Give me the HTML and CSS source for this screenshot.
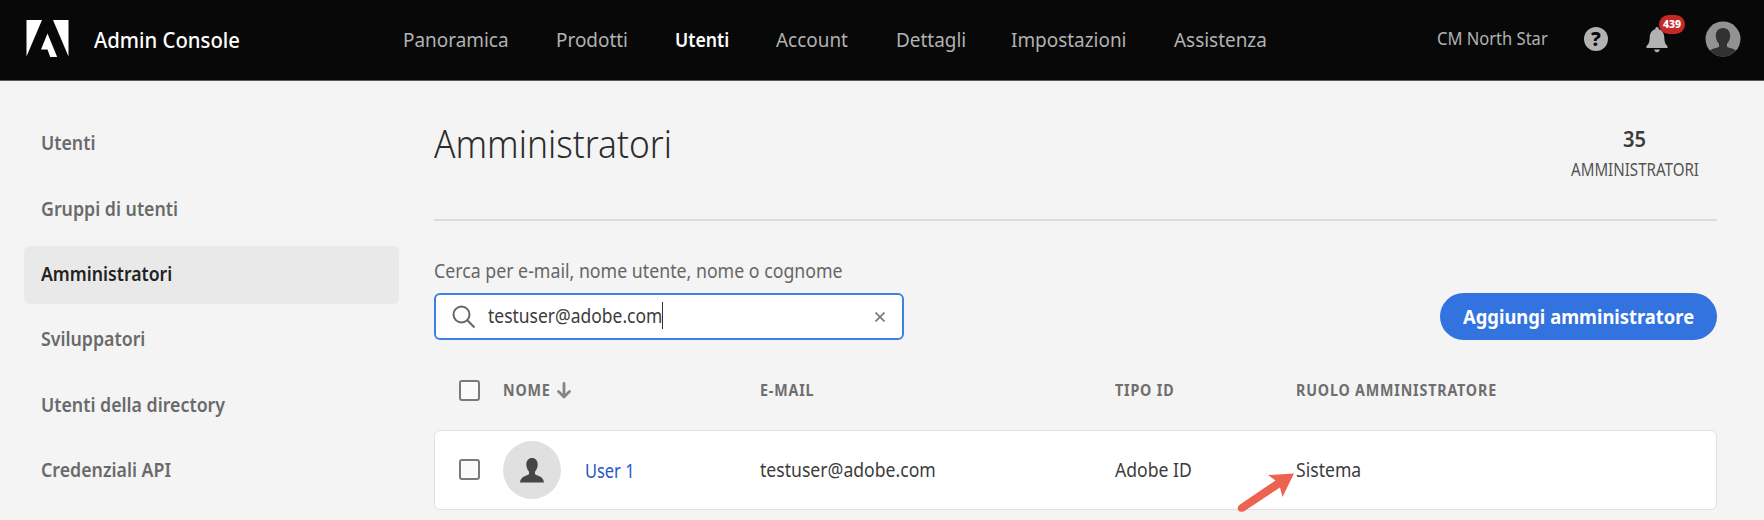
FILE: index.html
```html
<!DOCTYPE html>
<html lang="it">
<head>
<meta charset="utf-8">
<title>Admin Console</title>
<link rel="stylesheet" href="styles.css">
</head>
<body>
<header class="topbar">
  <svg class="logo" viewBox="0 0 42 37"><path d="M0 0H15.5L0 36.5zM26.500 0H42V36.500zM21 13.500L30.700 37H23.700L21 29.500H14.500z"/></svg>
  <span class="brand t">Admin Console</span>
  <nav class="nav">
    <span class="t">Panoramica</span>
    <span class="t">Prodotti</span>
    <span class="t active">Utenti</span>
    <span class="t">Account</span>
    <span class="t">Dettagli</span>
    <span class="t">Impostazioni</span>
    <span class="t">Assistenza</span>
  </nav>
  <span class="org t">CM North Star</span>
  <span class="help">?</span>
  <span class="bell">
    <svg viewBox="0 0 22 26"><path d="M11 0c1.200 0 1.700.8 1.700 2.200 4 1 5.400 4.200 5.600 8.300.2 4.600.9 6.700 3.200 8.500V21H.5v-2c2.300-1.800 3-3.900 3.200-8.500.2-4.100 1.600-7.300 5.600-8.300C9.300.8 9.800 0 11 0zM8.200 22.500h5.600c-.3 1.700-1.300 2.700-2.800 2.700s-2.500-1-2.800-2.700z"/></svg>
    <b class="badge">439</b>
  </span>
  <svg class="me" viewBox="0 0 36 36"><clipPath id="c"><circle cx="18" cy="18" r="17.500"/></clipPath><circle cx="18" cy="18" r="17.500" fill="#929292"/><path clip-path="url(#c)" fill="#323232" d="M18 7c4.300 0 7.200 3 7.200 7.800 0 3.600-1.400 6-3.200 8v2.600c0 1.600 8 1.400 9.500 5V36h-27v-5.600c1.500-3.600 9.500-3.400 9.500-5v-2.600c-1.800-2-3.200-4.400-3.200-8C10.800 10 13.700 7 18 7z"/></svg>
</header>
<div class="page">
  <aside class="side">
    <a class="item"><span class="t">Utenti</span></a>
    <a class="item"><span class="t">Gruppi di utenti</span></a>
    <a class="item selected"><span class="t">Amministratori</span></a>
    <a class="item"><span class="t">Sviluppatori</span></a>
    <a class="item"><span class="t">Utenti della directory</span></a>
    <a class="item"><span class="t">Credenziali API</span></a>
  </aside>
  <main class="main">
    <div class="head">
      <h1 class="title t">Amministratori</h1>
      <div class="count"><span class="num t">35</span><span class="cap t">AMMINISTRATORI</span></div>
    </div>
    <div class="label"><span class="t">Cerca per e-mail, nome utente, nome o cognome</span></div>
    <div class="tools">
      <div class="search">
        <svg class="lens" viewBox="0 0 24 24"><circle cx="9.500" cy="9.500" r="8"/><path d="M15.300 15.300L22.500 22.500"/></svg>
        <span class="query"><span class="t">testuser@adobe.com</span></span>
        <svg class="clear" viewBox="0 0 10 10"><path d="M.5.5l9 9M9.500.5l-9 9"/></svg>
      </div>
      <button class="add"><span class="t">Aggiungi amministratore</span></button>
    </div>
    <div class="row thead">
      <span class="box"></span>
      <span class="name"><span class="t nome">NOME</span><svg class="sort" viewBox="0 0 14 17"><path d="M7 1.500V15M1.500 9.500L7 15l5.500-5.500"/></svg></span>
      <span class="t">E-MAIL</span>
      <span class="t">TIPO ID</span>
      <span class="t">RUOLO AMMINISTRATORE</span>
    </div>
    <div class="row card">
      <span class="box"></span>
      <span class="name">
        <svg class="avatar" viewBox="0 0 58 58"><circle cx="29" cy="29" r="29" fill="#e0e0e0"/><path fill="#464646" d="M29 17c3.400 0 5.700 2.600 5.700 6.500 0 3.200-1.300 5.300-2.700 7.200V33c0 1.400 8.600 1.500 9 8.500H17c.4-7 9-7.100 9-8.500v-2.300c-1.400-1.900-2.700-4-2.700-7.200 0-3.900 2.300-6.500 5.700-6.500z"/></svg>
        <a class="t user">User 1</a>
      </span>
      <span class="t">testuser@adobe.com</span>
      <span class="t">Adobe ID</span>
      <span class="t">Sistema</span>
      <svg class="pointer" viewBox="0 0 58 41"><path d="M57 1.500L31 3l7.500 5.500L3 32.500c-5 4-1 9.500 4.500 6.500L43 15.500l2.500 9.500z"/></svg>
    </div>
  </main>
</div>
</body>
</html>
```
FILE: styles.css
```css
* { box-sizing: border-box; }
body {
  margin: 0;
  height: 520px;
  overflow: hidden;
  background: #f4f4f4;
  color: #3c3c3c;
  font: 400 20px/30px "Noto Sans", "Open Sans", sans-serif;
}
svg { display: block; flex: none; }

/* Slightly condensed text; each context sets its own --sx ratio */
.t {
  display: inline-block;
  justify-self: start;
  white-space: nowrap;
  transform: scaleX(var(--sx, .9));
  transform-origin: 0 50%;
}

.topbar {
  display: grid;
  grid-template-columns: 68px 309px 1034px 147px 62px 59px 36px;
  align-items: center;
  height: 81px;
  padding-left: 26px;
  background: #080808;
  border-bottom: 1px solid #5c5757;
  color: #b2b2b2;
}
.logo { width: 43px; height: 37px; margin-bottom: 3px; fill: #fff; }
.brand { --sx: .922; font-size: 22px; font-weight: 500; color: #fff; margin-top: -3px; }
.nav {
  --sx: .946;
  display: grid;
  grid-template-columns: 153px 119px 101px 120px 115px 163px 100px;
}
.nav .active { --sx: .885; font-weight: 600; color: #fff; }
.org { --sx: .918; font-size: 18px; margin-top: -5px; }
.help {
  width: 24px;
  height: 24px;
  border-radius: 50%;
  background: #b2b2b2;
  color: #080808;
  font-size: 20px;
  font-weight: 800;
  line-height: 24px;
  text-align: center;
  margin-bottom: 2px;
}
.bell { position: relative; }
.bell svg { width: 22px; height: 26px; fill: #b2b2b2; }
.badge {
  position: absolute;
  left: 13px;
  top: -12px;
  width: 26px;
  height: 19px;
  border-radius: 10px;
  background: #c62828;
  color: #fff;
  font-size: 10.500px;
  font-weight: 800;
  line-height: 19px;
  text-align: center;
}
.me { width: 36px; height: 36px; margin-bottom: 2px; }

.page {
  display: grid;
  grid-template-columns: 375px 1283px;
  column-gap: 35px;
  padding-left: 24px;
}
.side {
  display: flex;
  flex-direction: column;
  gap: 6.800px;
  padding-top: 34.200px;
}
.item {
  height: 58.500px;
  padding: 13.200px 17px 0;
  border-radius: 6px;
  color: #6a6a6a;
  font-weight: 600;
  --sx: .888;
}
.selected { --sx: .883; background: #e9e9e9; color: #222; }

.head {
  display: flex;
  justify-content: space-between;
  height: 140px;
  border-bottom: 2px solid #dcdcdc;
}
.title {
  --sx: .93;
  margin: 35px 0 0;
  color: #2c2c2c;
  font-size: 38px;
  font-weight: 300;
  line-height: 54px;
  height: 54px;
}
.count {
  display: grid;
  grid-template-rows: 30px 30px;
  width: 147px;
  padding-top: 43px;
}
.num { --sx: .96; margin-left: 53px; font-size: 21px; font-weight: 600; }
.cap { --sx: .84; font-size: 18px; margin-left: 1px; color: #555; }

.label { --sx: .887; height: 30px; margin: 35px 0 7px; color: #666; }
.tools { display: flex; justify-content: space-between; }
.search {
  display: flex;
  align-items: center;
  width: 470px;
  height: 47px;
  padding: 0 17px 0 16px;
  border: 2px solid #3f80e4;
  border-radius: 6px;
  background: #fff;
}
.lens { width: 24px; height: 24px; fill: none; stroke: #666; stroke-width: 2; }
.query {
  --sx: .873;
  width: 175px;
  height: 27px;
  margin: -3px auto 0 12px;
  line-height: 28px;
  border-right: 1.500px solid #333;
}
.clear { width: 10px; height: 10px; stroke: #777; stroke-width: 1.600; }
.add {
  width: 277px;
  height: 47px;
  padding: 0 23px;
  border: 0;
  border-radius: 24px;
  background: #3373e0;
  color: #fff;
  font: inherit;
  font-weight: 700;
  text-align: left;
  --sx: .918;
}

.row {
  display: grid;
  grid-template-columns: 44px 257px 355px 181px 1fr;
  align-items: center;
  padding-left: 25px;
}
.box {
  width: 21px;
  height: 21px;
  border: 2px solid #7a7a7a;
  border-radius: 3px;
  background: #fafafa;
}
.name { display: flex; align-items: center; }
.thead {
  --sx: .92;
  height: 90px;
  padding-top: 10px;
  color: #6e6e6e;
  font-size: 15.500px;
  font-weight: 700;
  letter-spacing: .9px;
}
.nome { width: 54px; }
.sort { width: 14px; height: 17px; fill: none; stroke: #868686; stroke-width: 2.800; stroke-linecap: round; stroke-linejoin: round; }

.card {
  position: relative;
  height: 80px;
  padding: 0 0 1px 24px;
  border: 1px solid #e1e1e1;
  border-radius: 6px;
  background: #fff;
  --sx: .88;
}
.avatar { width: 58px; height: 58px; }
.user { --sx: .82; margin: 2px 0 0 24px; color: #2456cc; }
.pointer {
  position: absolute;
  left: 802px;
  top: 41px;
  width: 58px;
  height: 41px;
  fill: #ec6351;
}
```
